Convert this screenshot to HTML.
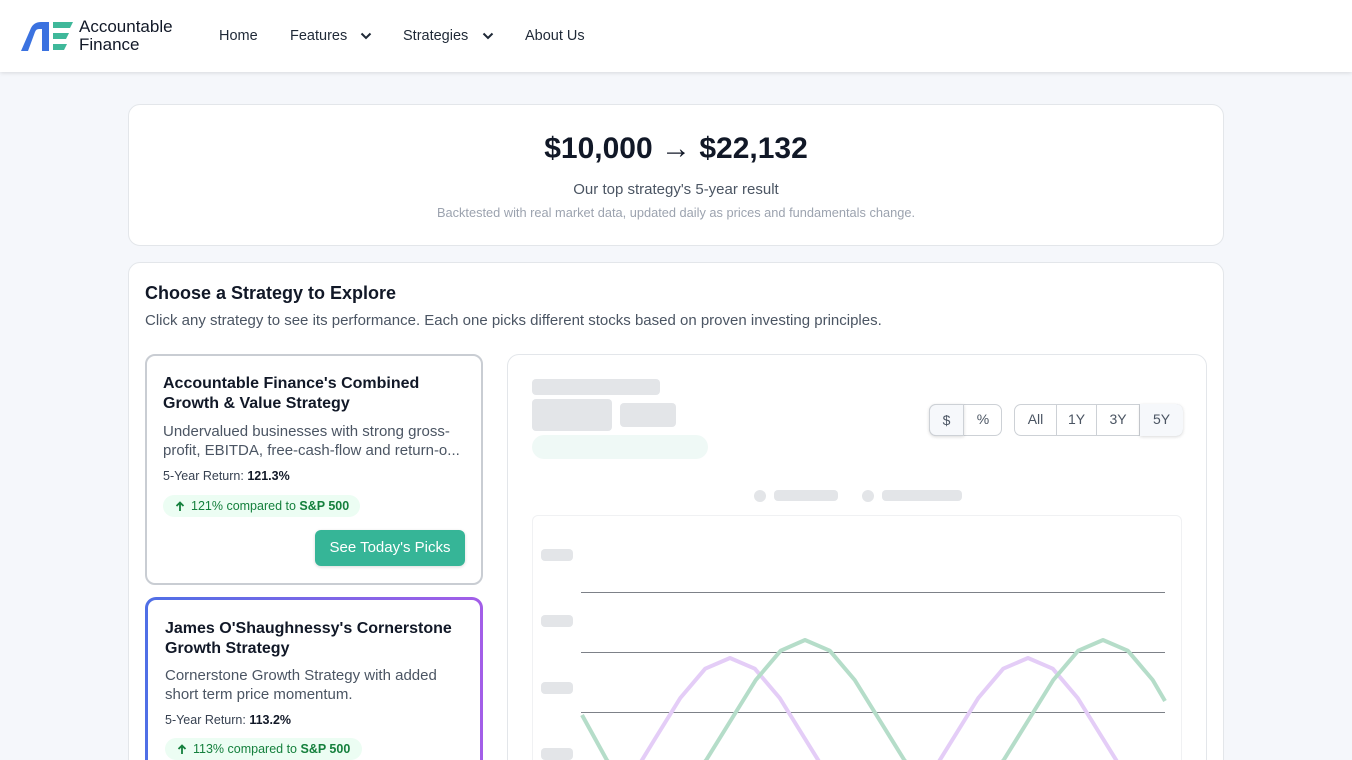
<!DOCTYPE html>
<html><head><meta charset="utf-8"><style>
*{box-sizing:border-box;margin:0;padding:0}
html,body{width:1352px;height:760px;overflow:hidden}
body{background:#f5f7fb;font-family:"Liberation Sans",sans-serif;color:#111827}
#w{position:relative;width:1352px;height:760px;overflow:hidden}
.nav{position:absolute;left:0;top:0;width:1352px;height:72px;background:#fff;box-shadow:0 1px 4px rgba(0,0,0,.12);z-index:2}
.nav a{position:absolute;top:28px;font-size:14.5px;color:#1f2937}
.abs{position:absolute}
.card{position:absolute;background:#fff;border:1px solid #e3e6ea;border-radius:12px}
.sk{position:absolute;background:#e3e5e8;border-radius:4px}
.btn{position:absolute;top:0;height:32px;line-height:30px;text-align:center;font-size:14px;color:#4b5563}
</style></head><body><div id="w">
<div class="nav">
<svg class="abs" style="left:19px;top:20px" width="56" height="32" viewBox="0 0 56 32">
<path d="M2 31 L12 8 Q15 2 22 2 L30 2 L30 31 L23 31 L23 9 L20 9 Q17 9 16 12 L9 31 Z" fill="#3b72e0"/>
<path d="M34 2 H54 L51 8 H34 Z M34 13 H50 L47 19 H34 Z M34 24 H48 L45 30 H34 Z" fill="#3fb89a"/>
</svg>
<div class="abs" style="left:79px;top:18px;font-size:17px;line-height:18px;color:#111827">Accountable<br>Finance</div>
<a style="left:219px">Home</a>
<a style="left:290px">Features</a>
<svg class="abs" style="left:360px;top:32px" width="12" height="8"><path d="M1.5 1.5 L6 6 L10.5 1.5" stroke="#1f2937" stroke-width="2" fill="none"/></svg>
<a style="left:403px">Strategies</a>
<svg class="abs" style="left:482px;top:32px" width="12" height="8"><path d="M1.5 1.5 L6 6 L10.5 1.5" stroke="#1f2937" stroke-width="2" fill="none"/></svg>
<a style="left:525px">About Us</a>
</div>

<div class="card" style="left:128px;top:104px;width:1096px;height:142px;text-align:center">
<div style="position:absolute;left:0;right:0;top:27px;font-size:30px;font-weight:bold;color:#111827">$10,000 → $22,132</div>
<div style="position:absolute;left:0;right:0;top:76px;font-size:15px;color:#4b5563">Our top strategy's 5-year result</div>
<div style="position:absolute;left:0;right:0;top:100px;font-size:12.8px;color:#9ca3af">Backtested with real market data, updated daily as prices and fundamentals change.</div>
</div>

<div class="card" style="left:128px;top:262px;width:1096px;height:520px">
<div class="abs" style="left:16px;top:20px;font-size:18px;font-weight:bold;color:#111827">Choose a Strategy to Explore</div>
<div class="abs" style="left:16px;top:49px;font-size:15px;color:#4b5563">Click any strategy to see its performance. Each one picks different stocks based on proven investing principles.</div>
</div>

<div class="abs" style="left:145px;top:354px;width:338px;height:231px;background:#fff;border:2px solid #c9cdd3;border-radius:10px">
<div class="abs" style="left:16px;top:18px;font-size:16px;font-weight:bold;line-height:20px;color:#111827">Accountable Finance's Combined<br>Growth &amp; Value Strategy</div>
<div class="abs" style="left:16px;top:66px;font-size:15px;line-height:19px;color:#4b5563;width:310px;white-space:nowrap">Undervalued businesses with strong gross-<br>profit, EBITDA, free-cash-flow and return-o...</div>
<div class="abs" style="left:16px;top:113px;font-size:12.5px;color:#374151">5-Year Return: <b style="color:#111827">121.3%</b></div>
<div class="abs" style="left:16px;top:139px;width:197px;height:22px;background:#ecfdf3;border-radius:11px;font-size:12.5px;line-height:22px;color:#15803d;padding-left:28px">121% compared to <b>S&amp;P 500</b>
<svg class="abs" style="left:12px;top:6px" width="10" height="11"><path d="M5 10V1.5M1.5 5L5 1.5 8.5 5" stroke="#15803d" stroke-width="1.8" fill="none"/></svg></div>
<div class="abs" style="left:168px;top:174px;width:150px;height:36px;background:#36b597;border-radius:6px;color:#fff;font-size:15px;line-height:36px;text-align:center;box-shadow:0 1px 3px rgba(0,0,0,.15)">See Today's Picks</div>
</div>

<div class="abs" style="left:145px;top:597px;width:338px;height:200px;border-radius:11px;background:linear-gradient(90deg,#4f6fe6,#a35ee8);padding:3px">
<div style="position:relative;background:#fff;border-radius:8px;width:100%;height:100%">
<div class="abs" style="left:17px;top:19px;font-size:16px;font-weight:bold;line-height:20px;color:#111827;white-space:nowrap">James O'Shaughnessy's Cornerstone<br>Growth Strategy</div>
<div class="abs" style="left:17px;top:66px;font-size:15px;line-height:19px;color:#4b5563;white-space:nowrap">Cornerstone Growth Strategy with added<br>short term price momentum.</div>
<div class="abs" style="left:17px;top:113px;font-size:12.5px;color:#374151">5-Year Return: <b style="color:#111827">113.2%</b></div>
<div class="abs" style="left:17px;top:138px;width:197px;height:22px;background:#ecfdf3;border-radius:11px;font-size:12.5px;line-height:22px;color:#15803d;padding-left:28px">113% compared to <b>S&amp;P 500</b>
<svg class="abs" style="left:12px;top:6px" width="10" height="11"><path d="M5 10V1.5M1.5 5L5 1.5 8.5 5" stroke="#15803d" stroke-width="1.8" fill="none"/></svg></div>
</div></div>

<div class="card" style="left:507px;top:354px;width:700px;height:440px">
<div class="sk" style="left:24px;top:24px;width:128px;height:16px"></div>
<div class="sk" style="left:24px;top:44px;width:80px;height:32px"></div>
<div class="sk" style="left:112px;top:48px;width:56px;height:24px"></div>
<div class="sk" style="left:24px;top:80px;width:176px;height:24px;background:#eff9f6;border-radius:12px"></div>
<div class="abs" style="left:421px;top:49px;width:73px;height:32px;border:1px solid #cdd1d6;border-radius:7px;background:#fff">
<div class="btn" style="left:-1px;top:-1px;width:35px;background:#f6f8fb;border:1px solid #cdd1d6;border-radius:7px 0 0 7px;box-shadow:0 1px 3px rgba(0,0,0,.15)">$</div>
<div class="btn" style="left:34px;top:-1px;width:38px">%</div></div>
<div class="abs" style="left:506px;top:49px;width:169px;height:32px;border:1px solid #cdd1d6;border-radius:7px;background:#fff">
<div class="btn" style="left:0;top:-1px;width:42px;border-right:1px solid #cdd1d6">All</div>
<div class="btn" style="left:42px;top:-1px;width:40px;border-right:1px solid #cdd1d6">1Y</div>
<div class="btn" style="left:82px;top:-1px;width:43px;border-right:1px solid #cdd1d6">3Y</div>
<div class="btn" style="left:125px;top:-1px;width:43px;background:#f6f8fb;border-radius:0 7px 7px 0;box-shadow:0 1px 3px rgba(0,0,0,.15)">5Y</div></div>
<div class="sk" style="left:246px;top:135px;width:12px;height:12px;border-radius:6px"></div>
<div class="sk" style="left:266px;top:135px;width:64px;height:11px"></div>
<div class="sk" style="left:354px;top:135px;width:12px;height:12px;border-radius:6px"></div>
<div class="sk" style="left:374px;top:135px;width:80px;height:11px"></div>
<div class="abs" style="left:24px;top:160px;width:650px;height:270px;border:1px solid #f0f1f3;border-radius:6px"></div>
<div class="sk" style="left:33px;top:194px;width:32px;height:12px"></div>
<div class="sk" style="left:33px;top:260px;width:32px;height:12px"></div>
<div class="sk" style="left:33px;top:327px;width:32px;height:12px"></div>
<div class="sk" style="left:33px;top:393px;width:32px;height:12px"></div>
</div>

<svg class="abs" style="left:0;top:0" width="1352" height="760">
<g stroke="#7d8188" stroke-width="1"><line x1="581" y1="592.5" x2="1165" y2="592.5"/><line x1="581" y1="652.5" x2="1165" y2="652.5"/><line x1="581" y1="712.5" x2="1165" y2="712.5"/></g>
<polyline fill="none" stroke="#e4cdf7" stroke-width="4" stroke-linejoin="round" points="581,818 606.2,807.3 631,778 655.5,738 680.3,698 705.2,668.7 730,658 754.8,668.7 779.7,698 804.5,738 829.3,778 854.2,807.3 879,818 903.8,807.3 928.7,778 953.5,738 978.3,698 1003.2,668.7 1028,658 1052.8,668.7 1077.7,698 1102.5,738 1127.3,778 1152.2,807.3 1165,815"/>
<polyline fill="none" stroke="#b5ddc9" stroke-width="4" stroke-linejoin="round" points="582,715 606.8,760 631.7,789.3 656.5,800 681.3,789.3 706.2,760 731,720 755.8,680 780.7,650.7 805,640 829.8,650.7 854.7,680 879.5,720 904.3,760 929.2,789.3 954,800 978.8,789.3 1003.7,760 1028.5,720 1053.3,680 1078.2,650.7 1103,640 1127.8,650.7 1152.7,680 1165,701"/>
</svg>
</div></body></html>
